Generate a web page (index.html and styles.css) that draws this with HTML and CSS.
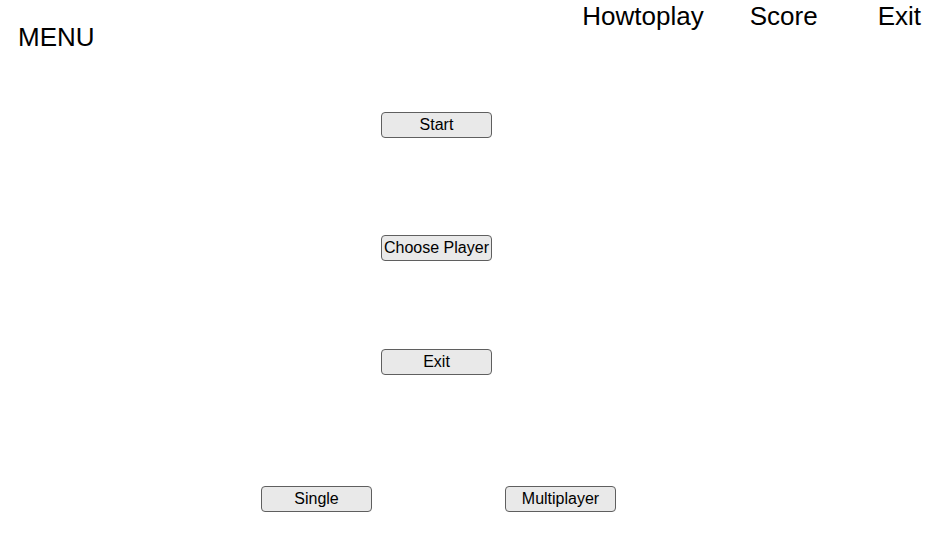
FILE: index.html
```html
<!DOCTYPE html>
<html>
<head>
<meta charset="utf-8">
<link rel="stylesheet" href="styles.css">
</head>
<body>
<header class="top">
  <div class="title">MENU</div>
  <nav class="nav">
    <span class="nav-item">Howtoplay</span>
    <span class="nav-item score">Score</span>
    <span class="nav-item exit">Exit</span>
  </nav>
</header>
<main class="menu">
  <button class="btn btn-start">Start</button>
  <button class="btn btn-choose">Choose Player</button>
  <button class="btn btn-exit">Exit</button>
  <div class="players">
    <button class="btn">Single</button>
    <button class="btn btn-multi">Multiplayer</button>
  </div>
</main>
</body>
</html>
```
FILE: styles.css
```css
html, body {
  margin: 0;
  padding: 0;
  background: #ffffff;
}
body {
  font-family: "Liberation Sans", Arial, sans-serif;
  color: #000;
  width: 949px;
  height: 543px;
  overflow: hidden;
}
.top {
  display: flex;
  justify-content: space-between;
  align-items: flex-start;
  padding: 1px 28px 0 18px;
  font-size: 26px;
  line-height: 30px;
}
.title {
  margin-top: 21px;
}
.nav {
  display: flex;
}
.score {
  margin-left: 46px;
}
.exit {
  margin-left: 60px;
}
.menu {
  display: flex;
  flex-direction: column;
  align-items: flex-start;
  padding-left: 381px;
  margin-top: 60px;
}
.btn {
  box-sizing: border-box;
  width: 111px;
  height: 26px;
  padding: 0;
  margin: 0;
  background: #e9e9e9;
  border: 1px solid #5f5f5f;
  border-radius: 4px;
  font-family: "Liberation Sans", Arial, sans-serif;
  font-size: 16px;
  line-height: 18px;
  color: #000;
  text-align: center;
  white-space: nowrap;
}
.btn-choose {
  margin-top: 97px;
}
.btn-exit {
  margin-top: 88px;
}
.players {
  display: flex;
  margin-top: 111px;
  margin-left: -120px;
}
.btn-multi {
  margin-left: 133px;
}
```
